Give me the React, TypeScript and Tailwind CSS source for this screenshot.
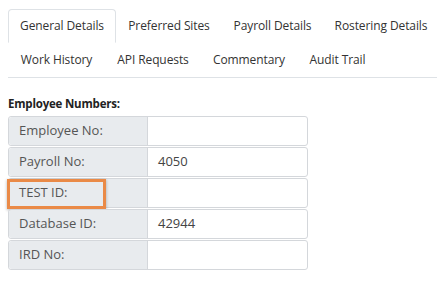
const ROW1: [string, number][] = [
  ["General Details", 108],
  ["Preferred Sites", 106],
  ["Payroll Details", 101],
  ["Rostering Details", 116],
];
const ROW2: [string, number][] = [
  ["Work History", 97],
  ["API Requests", 96],
  ["Commentary", 96],
  ["Audit Trail", 81],
];

const FIELDS: { label: string; value: string; flagged?: boolean }[] = [
  { label: "Employee No:", value: "" },
  { label: "Payroll No:", value: "4050" },
  { label: "TEST ID:", value: "", flagged: true },
  { label: "Database ID:", value: "42944" },
  { label: "IRD No:", value: "" },
];

function Tab({ label, width, active }: { label: string; width: number; active?: boolean }) {
  return (
    <div
      style={{ width }}
      className={`h-[34px] shrink-0 flex items-center justify-center whitespace-nowrap border rounded-t-[4px] text-[12px] tracking-[-0.1px] text-[#333] ${
        active ? "bg-white border-[#dee2e6] border-b-white" : "border-transparent"
      }`}
    >
      {label}
    </div>
  );
}

export default function App() {
  return (
    <div className="w-[437px] h-[294px] bg-white overflow-hidden pl-2 pt-[9px]" style={{ fontFamily: '"Open Sans", "Noto Sans", sans-serif' }}>
      <div className="border-b border-[#dee2e6]">
        <div className="flex">
          {ROW1.map(([t, w], i) => (
            <Tab key={t} label={t} width={w} active={i === 0} />
          ))}
        </div>
        <div className="flex">
          {ROW2.map(([t, w]) => (
            <Tab key={t} label={t} width={w} />
          ))}
        </div>
      </div>

      <p className="mt-[20px] text-[11.5px] font-bold text-[#222] leading-none whitespace-nowrap tracking-[-0.2px]">Employee Numbers:</p>

      <div className="mt-[6px] w-[300px] flex flex-col gap-px">
        {FIELDS.map(f => (
          <div key={f.label} className="relative flex h-[30px] border border-[#d4d7db] rounded-[3px]">
            <div className="w-[139px] shrink-0 bg-[#e8ebee] border-r border-[#d4d7db] flex items-center pl-[10px] text-[13px] text-[#555] rounded-l-[3px] whitespace-nowrap">
              {f.label}
            </div>
            <div className="flex-1 flex items-center pl-[10px] text-[13px] text-[#444]">{f.value}</div>
            {f.flagged && (
              <div className="absolute left-[-2px] top-0 w-[99px] h-[30px] border-[3px] border-[#ea8a47] shadow-[0_1px_3px_rgba(0,0,0,0.3)]" />
            )}
          </div>
        ))}
      </div>
    </div>
  );
}
